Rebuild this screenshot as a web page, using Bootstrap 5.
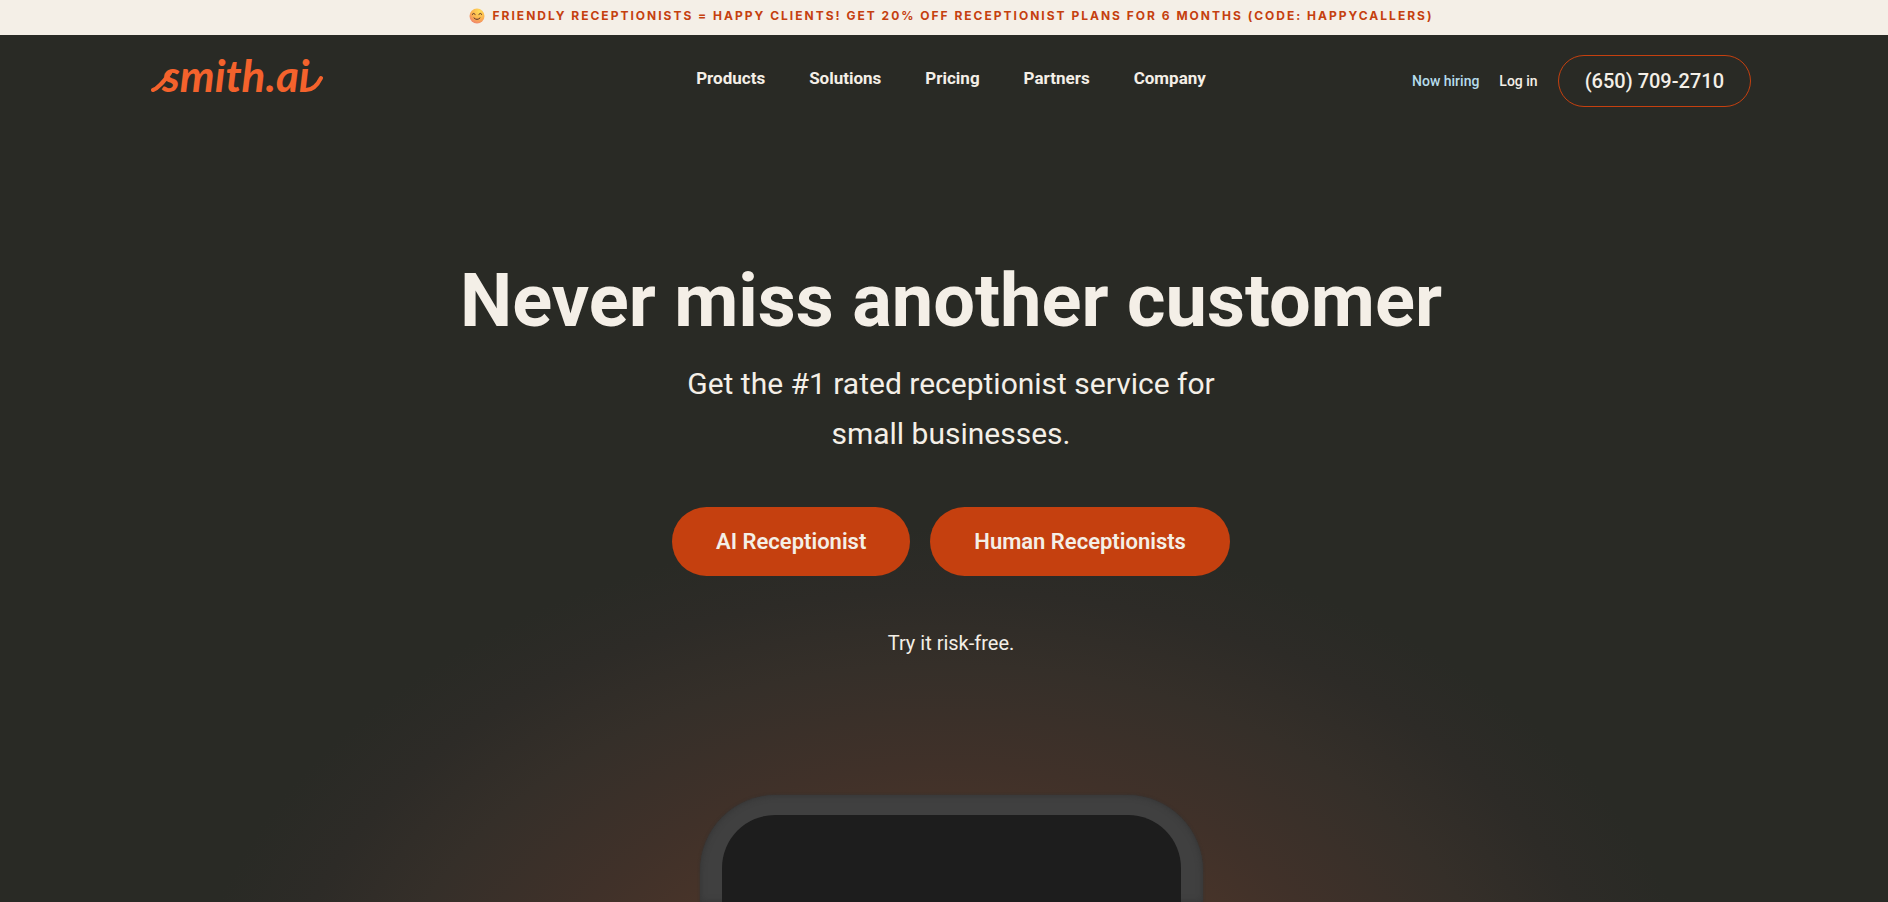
<!DOCTYPE html>
<html lang="en">
<head>
<meta charset="utf-8">
<meta name="viewport" content="width=device-width, initial-scale=1">
<title>Smith.ai | Never miss another customer</title>
<link rel="stylesheet" href="https://cdn.jsdelivr.net/npm/bootstrap@5.3.0/dist/css/bootstrap.min.css">
<style>
:root { --ink: #292a25; --cream: #f4efe7; --rust: #c5400f; }
body { background: var(--ink); color: var(--cream); font-family: Roboto, "Liberation Sans", sans-serif; padding-left: 14px; }
.promo { background: var(--cream); color: var(--rust); margin-left: -14px; padding: 4px 0 7px 14px; font: 700 12px/24px Inter, sans-serif; letter-spacing: 2px; text-decoration: none; }
.promo:hover { color: var(--rust); }
.site-width { max-width: 1600px; }
.site-header { padding: 14px 0; }
.side { flex: 1 1 0; }
.menu { gap: 44px; padding-bottom: 6px; }
.menu a { color: var(--cream); font-size: 17px; font-weight: 700; line-height: 24px; }
.aux { gap: 20px; font-size: 14px; font-weight: 500; }
.aux a { color: var(--cream); }
.aux .hiring { color: #b5dcec; }
.aux .phone-link { border: 1px solid var(--rust); border-radius: 26px; font-size: 20px; line-height: 30px; padding: 10px 26px; }
.hero { background: radial-gradient(760px 530px at 50% 930px, #5a3c2c 0%, #4b3529 38%, #403129 55%, #352f29 74%, #2d2b27 88%, transparent 100%); margin-left: -14px; padding: 136px 0 0 14px; }
.hero h1 { font-size: 74px; font-weight: 700; line-height: 76px; }
.tagline { max-width: 600px; font-size: 30px; line-height: 50px; margin-top: 20px; }
.cta { gap: 20px; margin-top: 48px; }
.cta .btn { --bs-btn-color: var(--cream); --bs-btn-bg: var(--rust); --bs-btn-hover-color: var(--cream); --bs-btn-hover-bg: #a9360c; padding: 19px 43px; font-size: 22px; font-weight: 600; line-height: 29px; }
.trial { margin-top: 52px; font-size: 20px; line-height: 30px; }
.handset { width: 503px; min-height: 107px; margin-top: 137px; padding: 20px 22px 0; background: #404040; border-radius: 76px 76px 0 0; box-shadow: inset 0 0 6px #333, 0 0 3px #333; }
.handset-screen { background: #1d1d1d; border-radius: 53px 53px 0 0; }
</style>
</head>
<body class="d-flex flex-column min-vh-100">
<a href="#offer" class="promo d-flex justify-content-center align-items-center gap-2">
  <svg width="16" height="16" viewBox="0 0 16 16" aria-hidden="true">
    <defs><radialGradient id="face" cx=".65" cy=".2" r=".9"><stop offset="0" stop-color="#ffdc57"/><stop offset=".55" stop-color="#fbb350"/><stop offset="1" stop-color="#ee7c70"/></radialGradient></defs>
    <circle cx="8" cy="8" r="7.5" fill="url(#face)"/>
    <g fill="none" stroke="#5c3328" stroke-linecap="round"><path d="M3.2 6.3Q4.7 4.2 6.2 6.3M9.8 6.3Q11.3 4.2 12.8 6.3M5 10Q8 13 11 10"/></g>
  </svg>
  <span>FRIENDLY RECEPTIONISTS = HAPPY CLIENTS! GET 20% OFF RECEPTIONIST PLANS FOR 6 MONTHS (CODE: HAPPYCALLERS)</span>
</a>
<header class="site-header">
  <div class="site-width mx-auto d-flex align-items-center">
    <div class="side">
      <a href="#home" aria-label="smith.ai">
        <svg class="d-block overflow-visible" width="174" height="64" viewBox="0 0 174 64">
          <g fill="none" stroke="#f4622c" stroke-width="4" stroke-linecap="round" stroke-linejoin="round"><path d="M2 41C8 39 13 32 19 24M153 41C161 42 166 37 170 29"/></g>
          <text x="11" y="43" font-family="Lato, sans-serif" font-size="44" font-style="italic" font-weight="700" fill="#f4622c">smith.ai</text>
        </svg>
      </a>
    </div>
    <nav class="menu d-flex" aria-label="Main">
      <a class="text-decoration-none" href="#products">Products</a>
      <a class="text-decoration-none" href="#solutions">Solutions</a>
      <a class="text-decoration-none" href="#pricing">Pricing</a>
      <a class="text-decoration-none" href="#partners">Partners</a>
      <a class="text-decoration-none" href="#company">Company</a>
    </nav>
    <div class="side aux d-flex justify-content-end align-items-center">
      <a class="hiring text-decoration-none" href="#careers">Now hiring</a>
      <a class="text-decoration-none" href="#login">Log in</a>
      <a class="phone-link text-decoration-none" href="tel:+16507092710">(650) 709-2710</a>
    </div>
  </div>
</header>
<main class="hero flex-grow-1 d-flex flex-column align-items-center text-center">
  <h1 class="m-0">Never miss another customer</h1>
  <p class="tagline mb-0">Get the #1 rated receptionist service for small businesses.</p>
  <div class="cta d-flex">
    <button type="button" class="btn rounded-pill">AI Receptionist</button>
    <button type="button" class="btn rounded-pill">Human Receptionists</button>
  </div>
  <p class="trial mb-0">Try it risk-free.</p>
  <div class="handset flex-grow-1 d-flex"><div class="handset-screen flex-grow-1"></div></div>
</main>
<script src="https://cdn.jsdelivr.net/npm/bootstrap@5.3.0/dist/js/bootstrap.bundle.min.js"></script>
</body>
</html>
